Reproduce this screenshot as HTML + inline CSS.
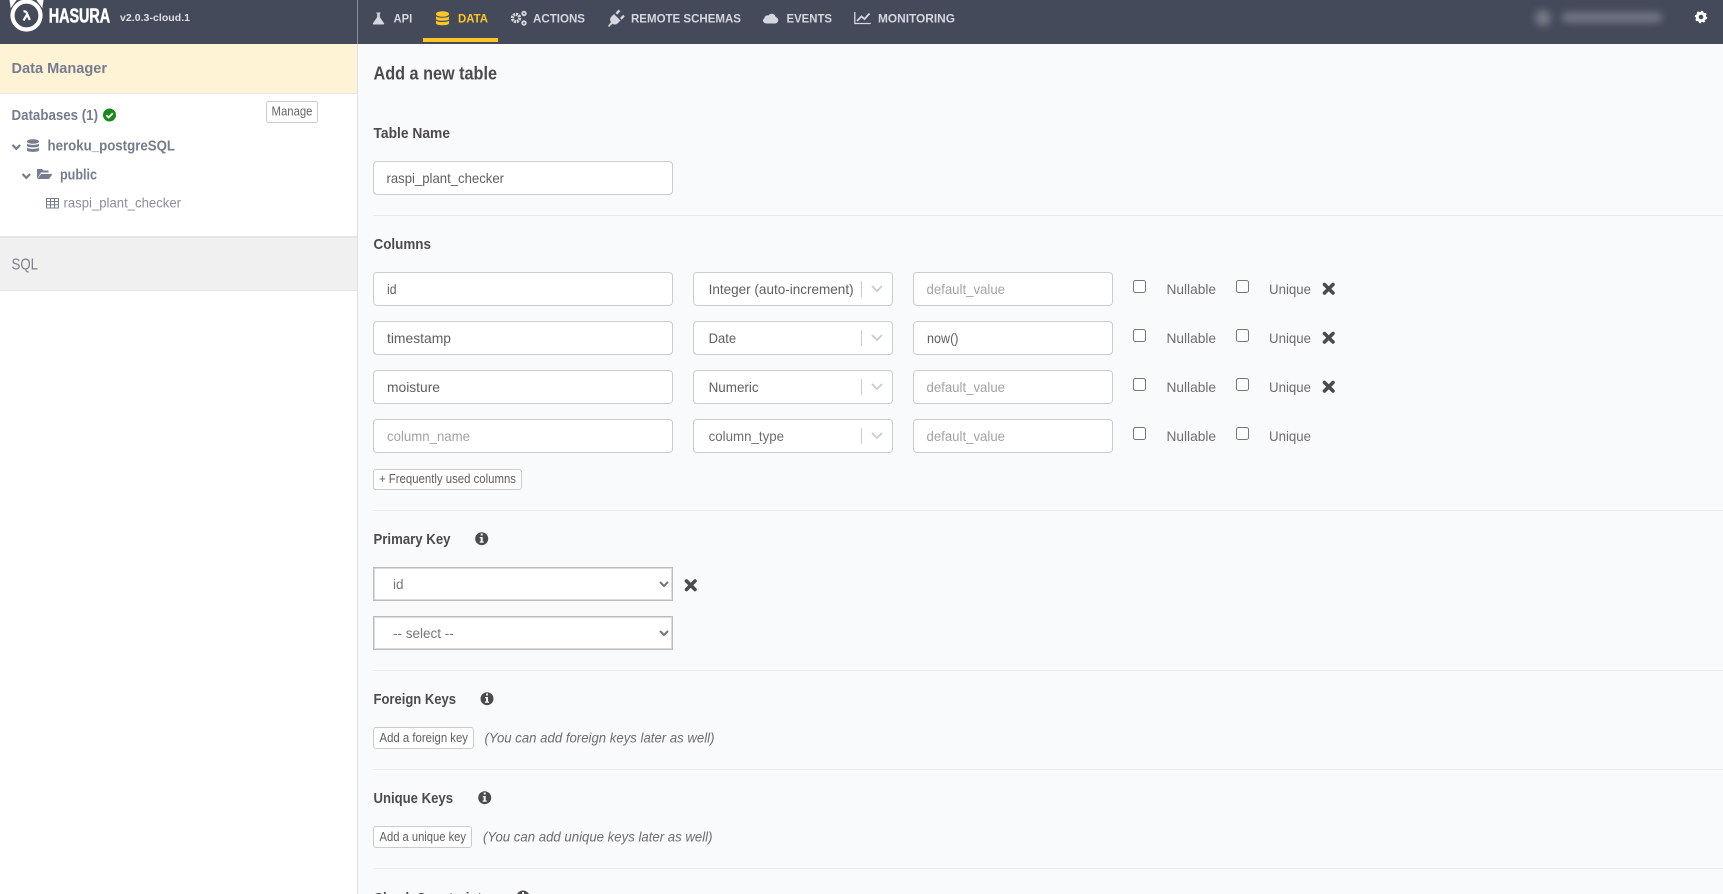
<!DOCTYPE html>
<html lang="en"><head><meta charset="utf-8"><title>Hasura - Add a new table</title>
<style>
html,body{margin:0;padding:0;width:1723px;height:894px;overflow:hidden;background:#f9fafc;font-family:"Liberation Sans",sans-serif}
.a{position:absolute;box-sizing:border-box}
.i{background:#fff;border:1px solid #ccc;border-radius:4px;height:34px}
.b{background:#fff;border:1px solid #ccc;border-radius:3px}
.h{background:#e9ecef;height:1px;left:373px;width:1350px}
select{position:absolute;box-sizing:border-box;left:373px;width:300px;height:34px;background:#fff;border:1px solid #bdbdbd;outline:1px solid #dcdcdc;outline-offset:-2px;border-radius:0;padding-left:15px;font:13.5px "Liberation Sans",sans-serif;color:#777;margin:0}
input[type=checkbox]{position:absolute;margin:0;width:13px;height:13px}
svg{position:absolute;left:0;top:0}
text{font-family:"Liberation Sans",sans-serif}
.n{font-size:12px;font-weight:bold;fill:#d5d7de}
.l{font-size:15px;font-weight:bold;fill:#4b4b4b}
.v{font-size:14px;fill:#5f5f5f}
.p{font-size:14px;fill:#a3a3a3}
.m{font-size:14px;fill:#6d6d6d}
.c{font-size:12.5px;fill:#5f5f5f}
.t{font-size:14px;font-style:italic;fill:#6d6d6d}
.s{font-size:15px;font-weight:bold;fill:#767c8e}
</style></head><body>
<div class="a" style="left:0;top:0;width:1723px;height:44px;background:#444a5a"></div>
<div class="a" style="left:357px;top:0;width:1px;height:44px;background:#8a8e99"></div>
<div class="a" style="left:423px;top:38px;width:75px;height:4px;background:#ffc627"></div>
<div class="a" style="left:0;top:44px;width:358px;height:850px;background:#fff;border-right:1px solid #dcdfe3"></div>
<div class="a" style="left:0;top:44px;width:357px;height:50px;background:#fff3d5;border-bottom:1px solid #e8e8e8"></div>
<div class="a" style="left:0;top:236px;width:357px;height:55px;background:#f0f0f0;border-top:2px solid #e5e5e5;border-bottom:1px solid #e5e5e5"></div>
<div class="a" style="left:1535px;top:10px;width:16px;height:16px;border-radius:50%;background:#767a87;filter:blur(4px)"></div>
<div class="a" style="left:1562px;top:13px;width:100px;height:9px;border-radius:4px;background:#787c89;filter:blur(4px)"></div>
<div class="a b" style="left:266px;top:101px;width:52px;height:22px"></div>

<div class="a i" style="left:373px;top:161px;width:300px"></div>
<div class="a h" style="top:215px"></div>
<div class="a i" style="left:373px;top:272px;width:300px"></div>
<div class="a i" style="left:693px;top:272px;width:200px"></div>
<div class="a i" style="left:913px;top:272px;width:200px"></div>
<div class="a i" style="left:373px;top:321px;width:300px"></div>
<div class="a i" style="left:693px;top:321px;width:200px"></div>
<div class="a i" style="left:913px;top:321px;width:200px"></div>
<div class="a i" style="left:373px;top:370px;width:300px"></div>
<div class="a i" style="left:693px;top:370px;width:200px"></div>
<div class="a i" style="left:913px;top:370px;width:200px"></div>
<div class="a i" style="left:373px;top:419px;width:300px"></div>
<div class="a i" style="left:693px;top:419px;width:200px"></div>
<div class="a i" style="left:913px;top:419px;width:200px"></div>
<input type="checkbox" style="left:1133px;top:280px"><input type="checkbox" style="left:1236px;top:280px">
<input type="checkbox" style="left:1133px;top:329px"><input type="checkbox" style="left:1236px;top:329px">
<input type="checkbox" style="left:1133px;top:378px"><input type="checkbox" style="left:1236px;top:378px">
<input type="checkbox" style="left:1133px;top:427px"><input type="checkbox" style="left:1236px;top:427px">
<div class="a b" style="left:373px;top:469px;width:149px;height:21px"></div>
<div class="a h" style="top:510px"></div>
<select style="top:567px"><option>id</option></select>
<select style="top:616px"><option>-- select --</option></select>
<div class="a h" style="top:670px"></div>
<div class="a b" style="left:373px;top:727px;width:101px;height:22px"></div>
<div class="a h" style="top:769px"></div>
<div class="a b" style="left:373px;top:826px;width:99px;height:22px"></div>
<div class="a h" style="top:868px"></div>

<svg width="1723" height="894" viewBox="0 0 1723 894" xmlns="http://www.w3.org/2000/svg">
<!-- logo -->
<circle cx="26.5" cy="15.5" r="14" fill="#444a5a" stroke="#fff" stroke-width="4.2"/>
<path d="M10 0h6l-5 7zM43 0h-6l5 7z" fill="#fff" stroke="#fff"/>
<path d="M23.5 11.5c2.500-.6 3 .8 3.600 2.400l2.700 6.100M26.800 15L23.500 20.500" fill="none" stroke="#fff" stroke-width="2.200"/>
<text x="48.7" y="22.7" font-size="20" font-weight="bold" fill="#fff" stroke="#fff" stroke-width=".5" textLength="61.5" lengthAdjust="spacingAndGlyphs">HASURA</text>
<text x="120" y="21" font-size="10.5" font-weight="bold" fill="#dfe0e5" textLength="70" lengthAdjust="spacing">v2.0.3-cloud.1</text>
<!-- nav -->
<path d="M376 12.5h4.5v1h-.7v3.5l4.2 6.2c.4.7 0 1.300-.8 1.300h-9.400c-.8 0-1.200-.6-.8-1.300l4.200-6.200v-3.500h-.7z" fill="#d5d7de"/>
<text class="n" x="393.5" y="22.7" textLength="18.7" lengthAdjust="spacingAndGlyphs">API</text>
<g fill="#ffc627"><ellipse cx="442.5" cy="14" rx="6.5" ry="2.8"/><path d="M436 16.2c1 2 12 2 13 0v3c-1 2-12 2-13 0zM436 20.5c1 2 12 2 13 0v3c-1 2.4-12 2.4-13 0z"/></g>
<text class="n" x="458" y="22.7" style="fill:#ffc627" textLength="30" lengthAdjust="spacingAndGlyphs">DATA</text>
<g fill="none" stroke="#d5d7de"><circle cx="516" cy="18" r="3.6" stroke-width="3.2" stroke-dasharray="2 .8"/><circle cx="524" cy="13.5" r="1.8" stroke-width="1.8"/><circle cx="524" cy="23" r="1.8" stroke-width="1.8"/></g>
<text class="n" x="533" y="22.7" textLength="52" lengthAdjust="spacingAndGlyphs">ACTIONS</text>
<path d="M608 26l3-4c-1.400-2-1-4 .5-5.500l2.500-2.500 6.500 6.500-2.500 2.500c-1.500 1.500-3.500 2-5.500.7L609 27zM615.500 13l3-3.500 1.800 1.800-3 3.200zM620 18l3.200-3.200 1.500 1.700-3 3.200z" fill="#d5d7de"/>
<text class="n" x="631" y="22.7" textLength="110" lengthAdjust="spacingAndGlyphs">REMOTE SCHEMAS</text>
<path d="M767 23.500h7.500c4.500 0 5-5.500 1.200-6.500-.5-3.500-5.500-4.500-7.200-1.500-2.500-.5-4 1-4 2.700-2.500.8-2 5.300 2.500 5.300z" fill="#d5d7de"/>
<text class="n" x="786.500" y="22.7" textLength="45.500" lengthAdjust="spacingAndGlyphs">EVENTS</text>
<path d="M854.800 12v11.500h16" fill="none" stroke="#d5d7de" stroke-width="1.300"/><path d="M857 21l4.500-4.500 3 2.500 5-5.500" fill="none" stroke="#d5d7de" stroke-width="1.800"/>
<text class="n" x="878" y="22.7" textLength="77" lengthAdjust="spacingAndGlyphs">MONITORING</text>
<circle cx="1701" cy="17" r="3.800" fill="none" stroke="#fff" stroke-width="3"/>
<circle cx="1701" cy="17" r="5.500" fill="none" stroke="#fff" stroke-width="1.500" stroke-dasharray="2 2.300"/>
<!-- sidebar -->
<text class="s" x="11.500" y="73" font-size="15.500" textLength="95.500" lengthAdjust="spacingAndGlyphs">Data Manager</text>
<text class="s" x="11.500" y="120" textLength="86.500" lengthAdjust="spacingAndGlyphs">Databases (1)</text>
<circle cx="109.500" cy="115" r="6.500" fill="#1a8a1a"/><path d="M106.300 115.200l2.300 2.300 4.200-4.200" fill="none" stroke="#fff" stroke-width="1.800"/>
<text x="271.500" y="115.700" font-size="12.500" fill="#666" textLength="41" lengthAdjust="spacingAndGlyphs">Manage</text>
<path d="M12.500 145l3.800 3.800 3.800-3.800" fill="none" stroke="#767c8e" stroke-width="2.200"/>
<g fill="#767c8e"><ellipse cx="33" cy="141.500" rx="6" ry="2.300"/><path d="M27 143.500c1 1.800 11 1.800 12 0v2.500c-1 1.800-11 1.800-12 0zM27 147.500c1 1.800 11 1.800 12 0v3c-1 1.800-11 1.800-12 0z"/></g>
<text class="s" x="47.500" y="150.700" textLength="127.500" lengthAdjust="spacingAndGlyphs">heroku_postgreSQL</text>
<path d="M22.500 174l3.800 3.800 3.800-3.800" fill="none" stroke="#767c8e" stroke-width="2.200"/>
<path d="M37 179v-10h5l1.500 1.500h5v2h-7.500zM37.500 179l3.500-5h11.500l-3.500 5z" fill="#767c8e"/>
<text class="s" x="60" y="179.300" font-size="14" textLength="37" lengthAdjust="spacingAndGlyphs">public</text>
<path d="M46.500 198.500h12v9.500h-12zM46.500 201.500h12M46.500 204.800h12M50.500 198.500v9.500M54.500 198.500v9.500" fill="none" stroke="#767c8e" stroke-width="1"/>
<text x="63.500" y="207.500" font-size="14" fill="#8a8e9c" textLength="117.500" lengthAdjust="spacingAndGlyphs">raspi_plant_checker</text>
<text x="11.500" y="269.500" font-size="15.500" fill="#7d8190" textLength="26.500" lengthAdjust="spacingAndGlyphs">SQL</text>
<!-- main -->
<text x="373.500" y="79.300" font-size="18.500" font-weight="bold" fill="#4b4b4b" textLength="123.500" lengthAdjust="spacingAndGlyphs">Add a new table</text>
<text class="l" x="373.500" y="138" textLength="76.500" lengthAdjust="spacingAndGlyphs">Table Name</text>
<text class="v" x="386.500" y="183" textLength="117.500" lengthAdjust="spacingAndGlyphs">raspi_plant_checker</text>
<text class="l" x="373.500" y="249" textLength="57.500" lengthAdjust="spacingAndGlyphs">Columns</text>
<!-- row 1 -->
<text class="v" x="387" y="294" textLength="9.500" lengthAdjust="spacingAndGlyphs">id</text>
<text class="v" x="708.600" y="294" textLength="145" lengthAdjust="spacingAndGlyphs">Integer (auto-increment)</text>
<text class="p" x="926.500" y="294" textLength="78.500" lengthAdjust="spacingAndGlyphs">default_value</text>
<text class="m" x="1166.500" y="294" textLength="49.500" lengthAdjust="spacingAndGlyphs">Nullable</text>
<text class="m" x="1269" y="294" textLength="42" lengthAdjust="spacingAndGlyphs">Unique</text>
<!-- row 2 -->
<text class="v" x="387" y="343" textLength="64" lengthAdjust="spacingAndGlyphs">timestamp</text>
<text class="v" x="708.600" y="343" textLength="27.500" lengthAdjust="spacingAndGlyphs">Date</text>
<text class="v" x="927" y="343" textLength="31.500" lengthAdjust="spacingAndGlyphs">now()</text>
<text class="m" x="1166.500" y="343" textLength="49.500" lengthAdjust="spacingAndGlyphs">Nullable</text>
<text class="m" x="1269" y="343" textLength="42" lengthAdjust="spacingAndGlyphs">Unique</text>
<!-- row 3 -->
<text class="v" x="387" y="392" textLength="53" lengthAdjust="spacingAndGlyphs">moisture</text>
<text class="v" x="708.600" y="392" textLength="50" lengthAdjust="spacingAndGlyphs">Numeric</text>
<text class="p" x="926.500" y="392" textLength="78.500" lengthAdjust="spacingAndGlyphs">default_value</text>
<text class="m" x="1166.500" y="392" textLength="49.500" lengthAdjust="spacingAndGlyphs">Nullable</text>
<text class="m" x="1269" y="392" textLength="42" lengthAdjust="spacingAndGlyphs">Unique</text>
<!-- row 4 -->
<text class="p" x="387" y="441" textLength="83" lengthAdjust="spacingAndGlyphs">column_name</text>
<text class="m" x="708.600" y="441" textLength="75.500" lengthAdjust="spacingAndGlyphs">column_type</text>
<text class="p" x="926.500" y="441" textLength="78.500" lengthAdjust="spacingAndGlyphs">default_value</text>
<text class="m" x="1166.500" y="441" textLength="49.500" lengthAdjust="spacingAndGlyphs">Nullable</text>
<text class="m" x="1269" y="441" textLength="42" lengthAdjust="spacingAndGlyphs">Unique</text>
<!-- separators and chevrons -->
<g fill="none" stroke="#ccc">
<path d="M861.500 281v16M861.500 330v16M861.500 379v16M861.500 428v16"/>
<path stroke-width="1.800" d="M872 286l5 5 5-5M872 335l5 5 5-5M872 384l5 5 5-5M872 433l5 5 5-5"/>
</g>
<!-- x icons -->
<g stroke="#4b4b4b" stroke-width="3.600" stroke-linecap="round" fill="none">
<path d="M1324.500 284.500l8.500 8.500M1333 284.500l-8.500 8.500"/>
<path d="M1324.500 333.500l8.500 8.500M1333 333.500l-8.500 8.500"/>
<path d="M1324.500 382.500l8.500 8.500M1333 382.500l-8.500 8.500"/>
<path d="M686.500 581l8.500 8.500M695 581l-8.500 8.500"/>
</g>
<text class="c" x="379" y="483" textLength="137" lengthAdjust="spacingAndGlyphs">+ Frequently used columns</text>
<text class="l" x="373.500" y="544" textLength="77" lengthAdjust="spacingAndGlyphs">Primary Key</text>
<text class="l" x="373.500" y="704" textLength="82.500" lengthAdjust="spacingAndGlyphs">Foreign Keys</text>
<text class="l" x="373.500" y="803" textLength="79.500" lengthAdjust="spacingAndGlyphs">Unique Keys</text>
<text class="l" x="373.500" y="903" textLength="115.500" lengthAdjust="spacingAndGlyphs">Check Constraints</text>
<text class="c" x="379.500" y="742" textLength="88.500" lengthAdjust="spacingAndGlyphs">Add a foreign key</text>
<text class="c" x="379.500" y="841" textLength="86.500" lengthAdjust="spacingAndGlyphs">Add a unique key</text>
<text class="t" x="484.500" y="742.700" textLength="230" lengthAdjust="spacingAndGlyphs">(You can add foreign keys later as well)</text>
<text class="t" x="483" y="841.500" textLength="229.500" lengthAdjust="spacingAndGlyphs">(You can add unique keys later as well)</text>
<!-- info icons -->
<g fill="#4b4b4b"><circle cx="481.700" cy="538.700" r="6.500"/><circle cx="487" cy="698.700" r="6.500"/><circle cx="484.700" cy="797.700" r="6.500"/><circle cx="523" cy="897" r="6.500"/></g>
<g fill="#f9fafc">
<path d="M480.700 533.500h2v2h-2zM479.700 537h3v4.500h1v1.200h-4v-1.200h1v-3.300h-1z"/>
<path d="M486 693.500h2v2h-2zM485 697h3v4.500h1v1.200h-4v-1.200h1v-3.300h-1z"/>
<path d="M483.700 792.500h2v2h-2zM482.700 796h3v4.500h1v1.200h-4v-1.200h1v-3.300h-1z"/>
<path d="M522 892h2v2h-2z"/>
</g>
</svg>
</body></html>
